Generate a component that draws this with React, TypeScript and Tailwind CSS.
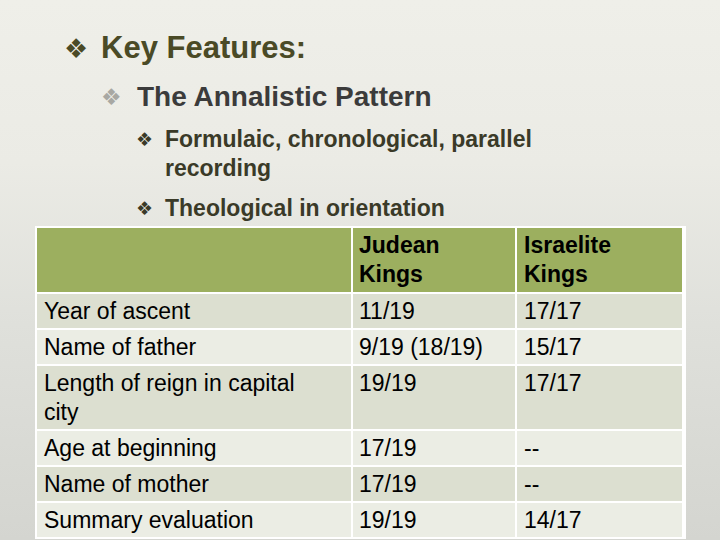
const font = { fontFamily: "'Liberation Sans', Arial, sans-serif" }

const rows = [
  { label: "Year of ascent", judah: "11/19", israel: "17/17", dark: true },
  { label: "Name of father", judah: "9/19 (18/19)", israel: "15/17", dark: false },
  { label: "Length of reign in capital city", judah: "19/19", israel: "17/17", dark: true },
  { label: "Age at beginning", judah: "17/19", israel: "--", dark: false },
  { label: "Name of mother", judah: "17/19", israel: "--", dark: true },
  { label: "Summary evaluation", judah: "19/19", israel: "14/17", dark: false },
]

function Bullet({ className }: { className: string }) {
  return <span className={`font-['DejaVu_Sans',sans-serif] ${className}`}>❖</span>
}

export default function App() {
  return (
    <div
      className="w-[720px] h-[540px] overflow-hidden bg-[linear-gradient(180deg,#efefe9_0%,#ebebe5_30%,#dfe0db_60%,#d4d5d0_100%)] pt-[28px]"
      style={font}
    >
      {/* level 1 */}
      <div className="flex items-center ml-[64px] h-[40px]">
        <span className="w-[37px] flex items-center">
          <Bullet className="text-[27px] text-[#4a4a26] leading-none" />
        </span>
        <span className="text-[31px] font-bold text-[#4a4a26] leading-[40px]">Key Features:</span>
      </div>

      {/* level 2 */}
      <div className="flex items-center ml-[101px] mt-[11px] h-[36px]">
        <span className="w-[36px] flex items-center">
          <Bullet className="text-[23px] text-[#a8a8a3] leading-none" />
        </span>
        <span className="text-[28px] font-bold text-[#3b3b3b] leading-[36px]">The Annalistic Pattern</span>
      </div>

      {/* level 3 */}
      <div className="flex ml-[136px] mt-[10px]">
        <span className="w-[29px] leading-[29px]">
          <Bullet className="text-[19px] text-[#3a3a28]" />
        </span>
        <span className="w-[400px] text-[23px] font-bold text-[#3a3a28] leading-[29px]">
          Formulaic, chronological, parallel recording
        </span>
      </div>
      <div className="flex ml-[136px] mt-[11px]">
        <span className="w-[29px] leading-[29px]">
          <Bullet className="text-[19px] text-[#3a3a28]" />
        </span>
        <span className="text-[23px] font-bold text-[#3a3a28] leading-[29px]">Theological in orientation</span>
      </div>

      {/* table */}
      <div className="ml-[35px] mt-[2px] w-[651px] bg-white p-[2px] grid grid-cols-[314px_162px_165px] gap-[2px] text-[23px] leading-[29px] text-black">
        <div className="bg-[#9caf5f] py-[3px] px-[7px]"></div>
        <div className="bg-[#9caf5f] py-[3px] px-[6px] font-bold">
          Judean
          <br />
          Kings
        </div>
        <div className="bg-[#9caf5f] py-[3px] px-[7px] font-bold">
          Israelite
          <br />
          Kings
        </div>
        {rows.map((r) => {
          const bg = r.dark ? "bg-[#dcdfd0]" : "bg-[#ebede4]"
          return (
            <div key={r.label} className="contents">
              <div className={`${bg} pt-[3px] pb-[2px] pl-[7px] pr-[24px]`}>{r.label}</div>
              <div className={`${bg} pt-[3px] pb-[2px] px-[6px]`}>{r.judah}</div>
              <div className={`${bg} pt-[3px] pb-[2px] px-[7px]`}>{r.israel}</div>
            </div>
          )
        })}
      </div>
    </div>
  )
}
